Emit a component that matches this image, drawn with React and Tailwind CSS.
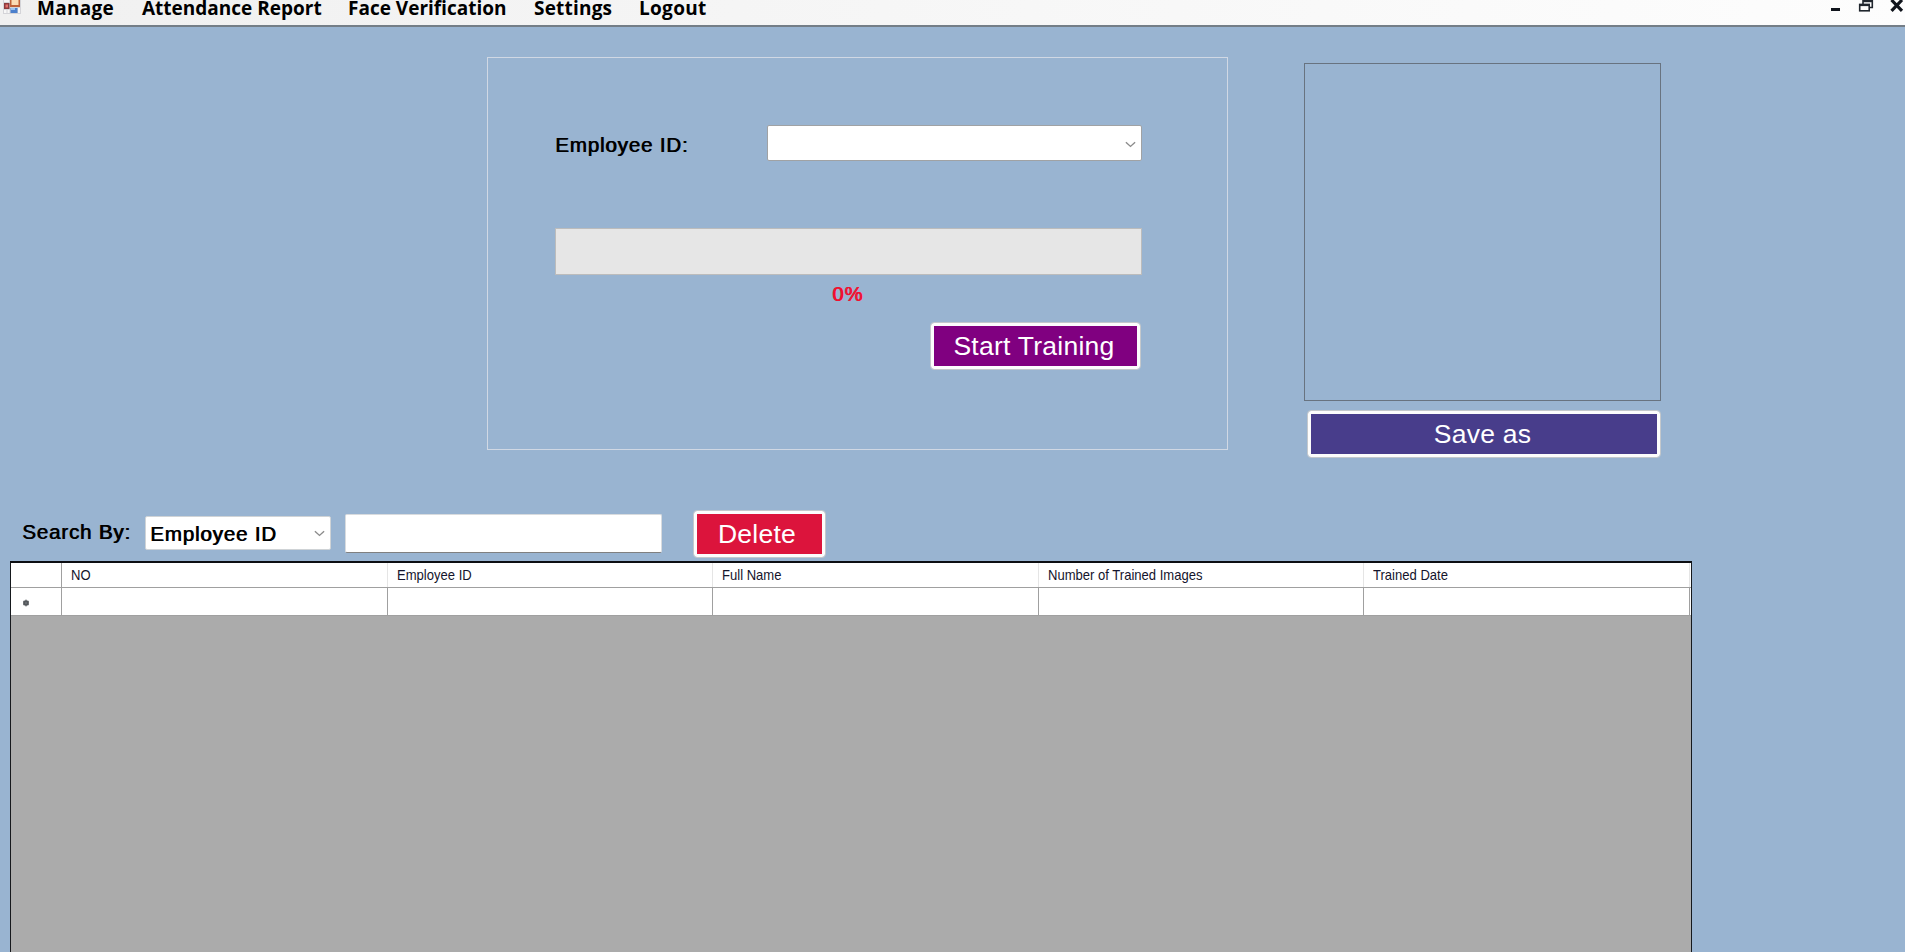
import React from "react";

const menuItems = [
  { label: "Manage", cls: "w-[105px] tracking-[0.3px]" },
  { label: "Attendance Report", cls: "w-[206px]" },
  { label: "Face Verification", cls: "w-[186px]" },
  { label: "Settings", cls: "w-[105px] tracking-[0.2px]" },
  { label: "Logout", cls: "w-[80px] tracking-[0.3px]" },
];

const columns = [
  { label: "NO", cls: "w-[326px]" },
  { label: "Employee ID", cls: "w-[325px]" },
  { label: "Full Name", cls: "w-[326px]" },
  { label: "Number of Trained Images", cls: "w-[325px]" },
  { label: "Trained Date", cls: "w-[326px]" },
];

function Chevron() {
  return (
    <svg width="11" height="7" viewBox="0 0 11 7" fill="none" className="shrink-0">
      <path d="M0.9 1.2L5.5 5.4L10.1 1.2" stroke="#8c8c8c" strokeWidth="1.4" />
    </svg>
  );
}

function FormIcon() {
  return (
    <svg width="18" height="14" viewBox="0 0 18 14" className="shrink-0">
      <rect x="0" y="0" width="18" height="14" fill="#d4d4d8" />
      <rect x="7" y="0" width="10" height="7" fill="#bf6238" />
      <rect x="8.5" y="0" width="7" height="5" fill="#fbdcb4" />
      <rect x="1" y="0" width="5" height="2" fill="#f4f4f4" />
      <rect x="1" y="3" width="5.5" height="6" fill="#8c3a3c" />
      <rect x="2.5" y="4.5" width="2.5" height="3" fill="#e5706c" />
      <rect x="1" y="10" width="2.5" height="3" fill="#f7f7f7" />
      <rect x="4.5" y="10" width="2" height="3" fill="#f7f7f7" />
      <rect x="7.5" y="8" width="7" height="5" fill="#4c80cc" />
      <rect x="8" y="8" width="4" height="2" fill="#9cc3ee" />
      <rect x="15" y="8" width="2" height="5" fill="#f7f7f7" />
    </svg>
  );
}

function WindowControls() {
  return (
    <svg width="75" height="14" viewBox="0 0 75 14" className="ml-auto shrink-0">
      <rect x="1" y="8" width="9" height="3" fill="#10141c" />
      <g fill="none" stroke="#20262e">
        <path d="M33 4V0.7H42.3V7.5H40" strokeWidth="1.6" />
        <path d="M33 1.2H42.5" strokeWidth="2" />
        <rect x="29.7" y="4.5" width="9.5" height="6.3" strokeWidth="1.6" />
        <path d="M29 5H40" strokeWidth="2.2" />
      </g>
      <path d="M61.5 0L72 10.8M72 0L61.5 10.8" stroke="#10141c" strokeWidth="3.2" />
    </svg>
  );
}

function BoldLabel({ children, className = "" }) {
  return (
    <span className={"block whitespace-nowrap text-[20.5px] leading-[20px] tracking-[0.85px] text-black [text-shadow:0.8px_0_0_#000] " + className}>
      {children}
    </span>
  );
}

function ActionButton({ children, className = "" }) {
  return (
    <button className={"block shrink-0 rounded-[3px] border-[3px] border-[#fcfcfc] pr-[3px] text-center text-[26.5px] leading-[36px] tracking-[0.25px] whitespace-nowrap text-white outline outline-[#c4c8cc] " + className}>
      {children}
    </button>
  );
}

export default function App() {
  return (
    <div className="flex h-[952px] w-[1905px] flex-col overflow-hidden bg-[#99b4d1] font-['Liberation_Sans',Arial,sans-serif]">
      <header className="flex h-[27px] shrink-0 items-start border-b-2 border-[#747e87] bg-gradient-to-r from-[#f0f0f0] to-[#fdfdfd] pl-[3px]">
        <FormIcon />
        <nav className="flex pl-[16px] font-['Open_Sans','Noto_Sans',sans-serif] text-[19px] leading-[16px] font-bold text-black">
          {menuItems.map((m) => (
            <span key={m.label} className={"shrink-0 whitespace-nowrap " + m.cls}>{m.label}</span>
          ))}
        </nav>
        <WindowControls />
      </header>

      <section className="flex h-[484px] shrink-0 items-start pt-[30px] pl-[487px]">
        <div className="h-[393px] w-[741px] shrink-0 border border-[#d0d8e4] pt-[67px] pl-[67px]">
          <div className="flex items-start">
            <BoldLabel className="w-[212px] pt-[10px]">Employee ID:</BoldLabel>
            <div className="flex h-[36px] w-[375px] items-center justify-end rounded-[2px] border border-[#a0a2a4] bg-white pt-[2px] pr-[5px]">
              <Chevron />
            </div>
          </div>
          <div className="mt-[67px] h-[47px] w-[587px] border border-[#bcbcbc] bg-[#e6e6e6]" />
          <div className="flex h-[48px] w-[585px] justify-center pt-[9px]">
            <span className="text-[20px] leading-[20px] tracking-[1px] text-[#f01030] [text-shadow:1px_0_0_#f01030]">0%</span>
          </div>
          <div className="flex w-[585px] justify-end">
            <ActionButton className="h-[46px] w-[209px] bg-[#800080]">Start Training</ActionButton>
          </div>
        </div>
        <div className="ml-[76px] flex flex-col items-end pt-[6px]">
          <div className="h-[338px] w-[357px] border border-[#687380]" />
          <ActionButton className="mt-[10px] mr-[1px] h-[46px] w-[352px] bg-[#483d8b]">Save as</ActionButton>
        </div>
      </section>

      <section className="flex h-[50px] shrink-0 items-start pl-[22px]">
        <BoldLabel className="w-[123px] pt-[11px]">Search By:</BoldLabel>
        <div className="mt-[5px] flex h-[34px] w-[186px] items-center justify-between rounded-[2px] border border-[#cfd3d6] bg-white pr-[5px] pl-[4px]">
          <BoldLabel className="pt-px">Employee ID</BoldLabel>
          <Chevron />
        </div>
        <div className="mt-[3px] ml-[14px] h-[39px] w-[317px] rounded-[2px] border border-[#d8dbde] border-b-[#808080] bg-white" />
        <ActionButton className="ml-[32px] h-[46px] w-[131px] bg-[#dc143c] pr-[5px]">Delete</ActionButton>
      </section>

      <main className="ml-[10px] flex h-[391px] w-[1682px] shrink-0 flex-col border-x border-t-2 border-x-[#15181c] border-t-[#0c0e12] bg-[#ababab]">
        <div className="flex h-[25px] shrink-0 border-b border-[#a0a0a0] bg-white">
          <div className="w-[51px] shrink-0 border-r border-[#a0a0a0]" />
          {columns.map((c) => (
            <div key={c.label} className={"shrink-0 border-r border-[#e5e5e5] pt-[3px] pl-[9px] " + c.cls}>
              <span className="block origin-left scale-x-[0.87] text-[15px] leading-[18px] whitespace-nowrap text-[#14142c]">{c.label}</span>
            </div>
          ))}
        </div>
        <div className="flex h-[28px] shrink-0 border-b border-[#a0a0a0] bg-white">
          <div className="flex w-[51px] shrink-0 items-center border-r border-[#a0a0a0] pt-[3px] pl-[11px]">
            <svg width="8" height="8" viewBox="0 0 8 8">
              <circle cx="4" cy="4" r="2.8" fill="#3c4044" />
              <path d="M4 0.5V7.5M1 2L7 6M7 2L1 6" stroke="#6c7074" strokeWidth="1" />
            </svg>
          </div>
          {columns.map((c) => (
            <div key={c.label} className={"shrink-0 border-r border-[#a0a0a0] " + c.cls} />
          ))}
        </div>
      </main>
    </div>
  );
}
